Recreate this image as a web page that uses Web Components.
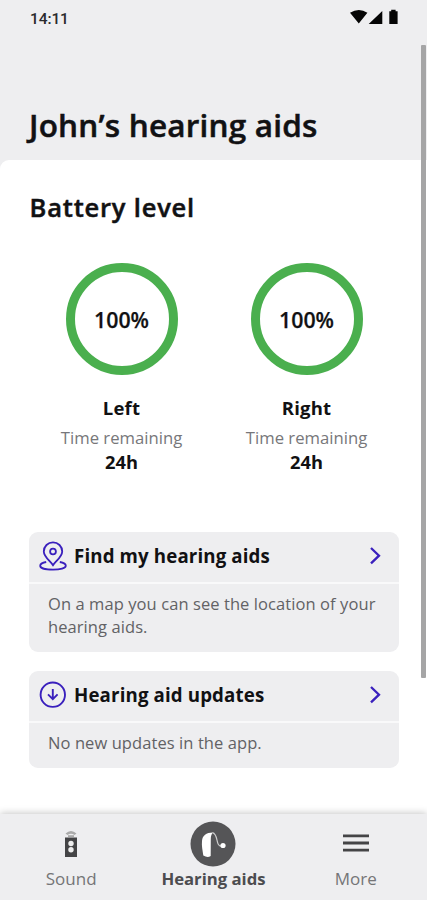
<!DOCTYPE html>
<html lang="en">
<head>
<meta charset="utf-8">
<title>John’s hearing aids</title>
<style>
html,body{margin:0;height:100%}
body{font-family:"Open Sans","Noto Sans",sans-serif;color:#111113;background:#fff;overflow:hidden}
</style>
</head>
<body>
<hearing-app></hearing-app>
<script>
const define = (name, html) => customElements.define(name, class extends HTMLElement {
  constructor() {
    super();
    this.attachShadow({ mode: "open" }).innerHTML = html;
  }
});

define("status-bar", `
<style>
:host{display:flex;justify-content:space-between;align-items:center;height:36px;padding:0 28px 0 30px;box-sizing:border-box;font:500 15.5px/36px Roboto,"Open Sans",sans-serif;letter-spacing:-.1px;color:#2a2a2c}
svg{display:block;width:50px;height:18px}
span{padding-top:1px}
</style>
<span>14:11</span>
<svg viewBox="349 9 50 18" fill="#050505"><path d="M350 12.7Q359 7.5 367.4 12.7L358.8 23.5zM368.7 24L382.3 11V24zM389.3 11.2H391.2V9.7H395.6V11.2H397.6V24H389.3z"/></svg>`);

define("battery-gauge", `
<style>
:host{display:flex;flex-direction:column;align-items:center;width:185px;text-align:center}
.ring{width:112px;height:112px;box-sizing:border-box;border:9.5px solid #4aaf4e;border-radius:50%;display:flex;align-items:center;justify-content:center;font-weight:600;font-size:21.3px;-webkit-text-stroke:.25px currentColor}
.ring span{padding-top:1px}
.side{font-weight:700;font-size:18.5px;line-height:24px;margin-top:21px;letter-spacing:.2px}
.cap{font-weight:400;font-size:16.7px;line-height:24px;margin-top:6px;color:#77777a}
.time{font-weight:700;font-size:18.3px;line-height:24px}
</style>
<div class="ring"><span><slot name="level"></slot></span></div>
<div class="side"><slot name="side"></slot></div>
<div class="cap">Time remaining</div>
<div class="time"><slot name="time"></slot></div>`);

define("info-card", `
<style>
:host{display:block;width:370px;background:#eeeef0;border-radius:9px;overflow:hidden}
.head{display:flex;align-items:center;height:52px;padding:0 17px 3px 10px;box-sizing:border-box;border-bottom:2px solid #f9f9fa;font-weight:700;font-size:18.7px;letter-spacing:.13px}
.head ::slotted(svg){width:28px;height:32px;margin-right:7px;flex:none}
.t{flex:1;margin-top:-1px}
.body{padding:8px 0 14px 19px;font-weight:400;font-size:16.5px;line-height:23px;letter-spacing:.08px;color:#626265}
.chev{width:14px;height:20px}
</style>
<div class="head"><slot name="icon"></slot><span class="t"><slot name="title"></slot></span>
<svg class="chev" viewBox="0 0 14 20" fill="none" stroke="#3a20bd" stroke-width="2.3"><path d="M3 2L11 9.700L3 17.400"/></svg></div>
<div class="body"><slot></slot></div>`);

define("nav-item", `
<style>
:host{display:flex;flex-direction:column;align-items:center;width:142.3px;font-size:17px;font-weight:400;color:#757577}
:host([active]){font-weight:700;font-size:16.7px;color:#4c4c4f}
.i{height:60px;display:flex;align-items:center}
.l{line-height:24px;margin-top:-7px;white-space:nowrap}
</style>
<div class="i"><slot name="icon"></slot></div><div class="l"><slot></slot></div>`);

define("hearing-app", `
<style>
:host{display:flex;flex-direction:column;position:relative;width:427px;height:900px;background:#eeeef0;overflow:hidden}
h1{margin:66px 0 0 29px;font-weight:600;font-size:31.5px;line-height:46px;height:58px;letter-spacing:.2px;-webkit-text-stroke:.5px currentColor;white-space:nowrap}
main{flex:1;background:#fff;border-radius:9px 0 0 0;padding:0 28px 0 29px;min-height:0}
h2{margin:30px 0 0 .6px;font-weight:600;font-size:25.5px;line-height:34px;letter-spacing:.8px;-webkit-text-stroke:.5px currentColor}
.g{display:flex;margin-top:39px;height:212px}
.cards{display:flex;flex-direction:column;gap:19px;margin-top:57px}
nav{display:flex;height:86px;background:#eeeef0;box-shadow:0 -1px 7px rgba(0,0,0,.22);flex:none}
.bar{position:absolute;left:421px;top:45px;width:4.5px;height:633px;background:#a5a5a6;border-radius:1px}
svg{display:block}
</style>
<status-bar></status-bar>
<h1>John’s hearing aids</h1>
<main>
<h2>Battery level</h2>
<div class="g">
<battery-gauge><span slot="level">100%</span><span slot="side">Left</span><span slot="time">24h</span></battery-gauge>
<battery-gauge><span slot="level">100%</span><span slot="side">Right</span><span slot="time">24h</span></battery-gauge>
</div>
<div class="cards">
<info-card>
<svg slot="icon" viewBox="0 0 28 32" fill="none" stroke="#3a20bd" stroke-width="1.8"><path d="M14 25.2C11 20.8 4.8 16.800 4.800 11.500A9.200 9.200 0 0 1 23.200 11.500C23.200 16.800 17 20.800 14 25.200z"/><circle cx="14" cy="11.500" r="2.900"/><path d="M7.200 22C3 22.800 1.200 24 1.200 25.700C1.200 28.200 6.800 29.700 14 29.700S26.800 28.200 26.800 25.700C26.800 24 25 22.800 20.800 22"/></svg>
<span slot="title">Find my hearing aids</span>On a map you can see the location of your hearing aids.</info-card>
<info-card>
<svg slot="icon" viewBox="0 0 28 32" fill="none" stroke="#3a20bd" stroke-width="1.9"><circle cx="13.8" cy="15.700" r="12.2"/><path d="M13.8 10V20M9 15.400L13.800 20.200L18.600 15.400"/></svg>
<span slot="title">Hearing aid updates</span>No new updates in the app.</info-card>
</div>
</main>
<nav>
<nav-item><svg slot="icon" width="16" height="30" viewBox="0 0 16 30"><path d="M2.500 4.500Q8 -.5 13.500 4.500L11.500 6Q8 3.300 4.500 6z" fill="#aaa"/><path d="M5 6.200H11V8H5z" fill="#aaa"/><path d="M2 8.500H14V28H2z" fill="#444446"/><circle cx="8" cy="14.500" r="2.700" fill="#eee"/><circle cx="8" cy="20.700" r="2.700" fill="#eee"/></svg>Sound</nav-item>
<nav-item active><svg slot="icon" width="46" height="46" viewBox="0 0 46 46"><circle cx="23" cy="23" r="22.500" fill="#555557"/><path d="M12 20C12.500 14.500 16 11.500 23 11.500C21.500 13.200 20.800 15 20.800 18L20.700 35Q17.500 37 13.300 34.500C12.500 29 11.500 25 12 20z" fill="#fff"/><path d="M22.500 11.700C29 13.500 25 26 32 25" fill="none" stroke="#ccc" stroke-width="1.200"/><circle cx="33" cy="24.500" r="2.600" fill="#fff"/></svg>Hearing aids</nav-item>
<nav-item><svg slot="icon" width="26" height="20" viewBox="0 0 26 20"><path d="M0 1.900H26M0 9H26M0 16.100H26" stroke="#444446" stroke-width="2.800"/></svg>More</nav-item>
</nav>
<div class="bar"></div>`);
</script>
</body>
</html>
